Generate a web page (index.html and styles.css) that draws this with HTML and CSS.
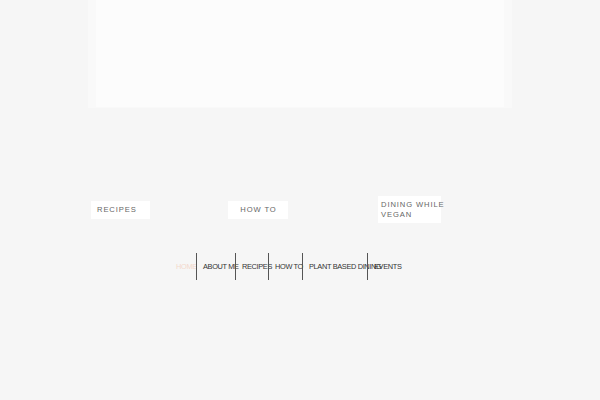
FILE: index.html
```html
<!DOCTYPE html>
<html>
<head>
<meta charset="utf-8">
<link rel="stylesheet" href="styles.css">
</head>
<body>
<div class="page">
  <div class="hero"><div class="hero-inner"></div></div>
  <div class="tiles">
    <a class="tile tile-recipes">RECIPES</a>
    <a class="tile tile-howto">HOW TO</a>
    <a class="tile tile-dining">DINING WHILE<br>VEGAN</a>
  </div>
  <nav class="nav">
    <span class="nav-item nav-home">HOME</span>
    <span class="nav-item nav-about">ABOUT ME</span>
    <span class="nav-item nav-recipes">RECIPES</span>
    <span class="nav-item nav-howto">HOW TO</span>
    <span class="nav-item nav-plant">PLANT BASED DINING</span>
    <span class="nav-item nav-events">EVENTS</span>
  </nav>
</div>
</body>
</html>
```
FILE: styles.css
```css
html, body {
  margin: 0;
  padding: 0;
  background: #f6f6f6;
  font-family: "Liberation Sans", Arial, sans-serif;
}
.page {
  width: 424px;
  margin: 0 auto;
}
.hero {
  height: 108px;
  background: #f9f9f9;
  padding: 0 8px 1px;
  box-sizing: border-box;
}
.hero-inner {
  height: 100%;
  background: #fcfcfc;
}
.tiles {
  margin-top: 88px;
  height: 27px;
  padding-left: 3px;
  display: grid;
  grid-template-columns: 137px 150px auto;
  align-items: center;
}
.tile {
  display: block;
  background: #fff;
  color: #666;
  font-size: 7.6px;
  letter-spacing: 0.9px;
  line-height: 10px;
  white-space: nowrap;
}
.tile-recipes {
  width: 59px;
  height: 18px;
  padding: 4px 6px;
  box-sizing: border-box;
}
.tile-howto {
  width: 60px;
  height: 18px;
  padding: 4px 0 4px 1px;
  box-sizing: border-box;
  text-align: center;
}
.tile-dining {
  width: 63px;
  height: 27px;
  padding: 4px 3px 3px;
  box-sizing: border-box;
}
.nav {
  margin-top: 30px;
  margin-left: 88px;
  display: grid;
  grid-template-columns: 20px 39px 33px 34px 65px auto;
  height: 27px;
}
.nav-item {
  font-size: 7.4px;
  letter-spacing: -0.35px;
  color: #333;
  white-space: nowrap;
  line-height: 27px;
  border-left: 1px solid #555;
  padding-left: 6px;
  overflow: visible;
}
.nav-home {
  border-left: none;
  padding-left: 0;
  color: #f4d9cc;
}
```
